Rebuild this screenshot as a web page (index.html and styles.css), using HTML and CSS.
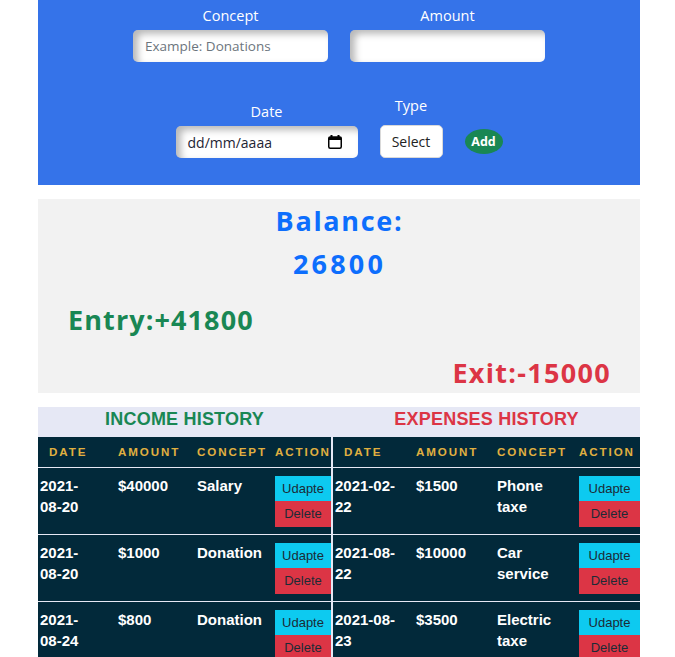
FILE: index.html
```html
<!DOCTYPE html>
<html lang="en">
<head>
<meta charset="utf-8">
<title>Budget</title>
<link rel="stylesheet" href="styles.css">
</head>
<body>
<div class="container">
  <section class="form">
    <div class="form-row">
      <div class="field">
        <label class="label">Concept</label>
        <input class="input input-wide" type="text" placeholder="Example: Donations">
      </div>
      <div class="field">
        <label class="label">Amount</label>
        <input class="input input-wide" type="text">
      </div>
    </div>
    <div class="form-row form-row-2">
      <div class="field">
        <label class="label">Date</label>
        <div class="input input-date">
          <span class="date-text">dd/mm/aaaa</span>
          <svg class="cal" width="14" height="14" viewBox="0 0 14 14">
            <rect x="2.5" y="0" width="2" height="3" fill="#000"/>
            <rect x="9.5" y="0" width="2" height="3" fill="#000"/>
            <rect x="0.75" y="2" width="12.5" height="11.25" rx="1.5" fill="none" stroke="#000" stroke-width="1.5"/>
            <rect x="0.75" y="2" width="12.5" height="3" fill="#000"/>
          </svg>
        </div>
      </div>
      <div class="field field-type">
        <label class="label label-type">Type</label>
        <button class="select" type="button">Select</button>
      </div>
      <button class="add" type="button">Add</button>
    </div>
  </section>

  <section class="balance">
    <div class="bal-title">Balance:</div>
    <div class="bal-num">26800</div>
    <div class="entry">Entry:+41800</div>
    <div class="exit">Exit:-15000</div>
  </section>

  <section class="history">
    <div class="hist hist-income">
      <div class="hist-title title-income">INCOME HISTORY</div>
      <table class="tbl">
        <colgroup><col class="c78"><col class="c79"><col class="c78"><col class="c58"></colgroup>
        <thead><tr><th>DATE</th><th>AMOUNT</th><th>CONCEPT</th><th>ACTION</th></tr></thead>
        <tbody>
          <tr><td>2021-08-20</td><td>$40000</td><td>Salary</td><td class="act"><button class="btn up">Udapte</button><button class="btn del">Delete</button></td></tr>
          <tr><td>2021-08-20</td><td>$1000</td><td>Donation</td><td class="act"><button class="btn up">Udapte</button><button class="btn del">Delete</button></td></tr>
          <tr><td>2021-08-24</td><td>$800</td><td>Donation</td><td class="act"><button class="btn up">Udapte</button><button class="btn del">Delete</button></td></tr>
        </tbody>
      </table>
    </div>
    <div class="hist hist-exp">
      <div class="hist-title title-exp">EXPENSES HISTORY</div>
      <table class="tbl">
        <colgroup><col class="c81"><col class="c81"><col class="c82"><col class="c63"></colgroup>
        <thead><tr><th>DATE</th><th>AMOUNT</th><th>CONCEPT</th><th>ACTION</th></tr></thead>
        <tbody>
          <tr><td>2021-02-22</td><td>$1500</td><td>Phone taxe</td><td class="act"><button class="btn up">Udapte</button><button class="btn del">Delete</button></td></tr>
          <tr><td>2021-08-22</td><td>$10000</td><td>Car service</td><td class="act"><button class="btn up">Udapte</button><button class="btn del">Delete</button></td></tr>
          <tr><td>2021-08-23</td><td>$3500</td><td>Electric taxe</td><td class="act"><button class="btn up">Udapte</button><button class="btn del">Delete</button></td></tr>
        </tbody>
      </table>
    </div>
  </section>
</div>
</body>
</html>
```
FILE: styles.css
```css
* { box-sizing: border-box; }
html, body { margin: 0; padding: 0; background: #fff; }
body { font-family: "Open Sans", "Noto Sans", sans-serif; }

.container { width: 602px; margin: 0 0 0 38px; }

/* ---------- form ---------- */
.form { background: #3573e9; padding: 6px 0 27px; }
.form-row { display: flex; justify-content: center; align-items: flex-end; gap: 22px; }
.form-row-2 { margin-top: 34px; }
.field { display: flex; flex-direction: column; align-items: center; }
.label { color: #fff; font-size: 14.5px; line-height: 20px; margin-bottom: 4px; }
.label-type { margin-bottom: 9px; }
.input {
  border: none; border-radius: 5px; background: #fff; height: 32px;
  box-shadow: inset 5px 4px 7px rgba(0,0,0,0.28);
  font-family: "Open Sans", sans-serif; font-size: 13.5px; padding: 0 12px; outline: none;
}
.input-wide { width: 195px; }
.input::placeholder { color: #6c757d; }
.input-date { width: 182px; display: flex; align-items: center; justify-content: space-between; padding: 0 16px 0 12px; }
.date-text { font-size: 14px; color: #1d2433; }
.cal { display: block; }
.select {
  width: 63px; height: 33px; background: #fff; border: 1px solid #d9d9d9; border-radius: 5px;
  font-family: "Open Sans", sans-serif; font-size: 14px; color: #222; padding: 0;
}
.add {
  width: 38px; height: 25px; border: none; border-radius: 50%; background: #198754; color: #fff;
  font-family: "Open Sans", sans-serif; font-weight: 700; font-size: 12.5px; padding: 0; margin-bottom: 4px;
}

/* ---------- balance ---------- */
.balance { background: #f2f2f2; margin-top: 14px; height: 194px; padding: 4px 29px 0 30px; font-weight: 700; font-size: 27px; line-height: 36px; letter-spacing: 1.1px; }
.bal-title { color: #0d6efd; text-align: center; letter-spacing: 1.7px; }
.bal-num { color: #0d6efd; text-align: center; margin-top: 7px; letter-spacing: 3.2px; }
.entry { color: #198754; margin-top: 20px; }
.exit { color: #dc3545; text-align: right; margin-top: 17px; letter-spacing: 1.3px; }

/* ---------- history ---------- */
.history { margin-top: 14px; background: #e6e8f5; display: flex; gap: 2px; }
.hist-income { width: 293px; }
.hist-exp { width: 307px; }
.hist-title { height: 30px; line-height: 24px; padding-top: 0; text-align: center; font-family: "Liberation Sans", Arial, sans-serif; font-weight: 700; font-size: 18px; letter-spacing: 0.2px; }
.title-income { color: #198754; }
.title-exp { color: #dc3545; }

.tbl { width: 100%; border-collapse: collapse; table-layout: fixed; background: #02293a; font-family: "Liberation Sans", Arial, sans-serif; }
.c78 { width: 78px; } .c79 { width: 79px; } .c58 { width: 58px; }
.c81 { width: 81px; } .c82 { width: 82px; } .c63 { width: 63px; }
.tbl th {
  height: 30px; padding: 0 0 0 2px; text-align: left; color: #e0b040; font-size: 11.6px; font-weight: 700;
  letter-spacing: 1.9px; border-bottom: 1px solid #e6e8f5; white-space: nowrap;
}
.tbl th:first-child { padding-left: 11px; }
.tbl td {
  vertical-align: top; padding: 7px 18px 7px 2px; color: #fff; font-weight: 700; font-size: 15px;
  line-height: 21px; border-bottom: 1px solid #e6e8f5;
}
.tbl td.act { padding: 8px 0 7px 2px; }
.btn { display: block; width: 100%; border: none; padding: 0; margin: 0; font-family: "Liberation Sans", Arial, sans-serif; font-size: 13px; color: #1c2b36; }
.up { background: #0dcaf0; height: 25px; }
.del { background: #dc3545; height: 26px; }
```
